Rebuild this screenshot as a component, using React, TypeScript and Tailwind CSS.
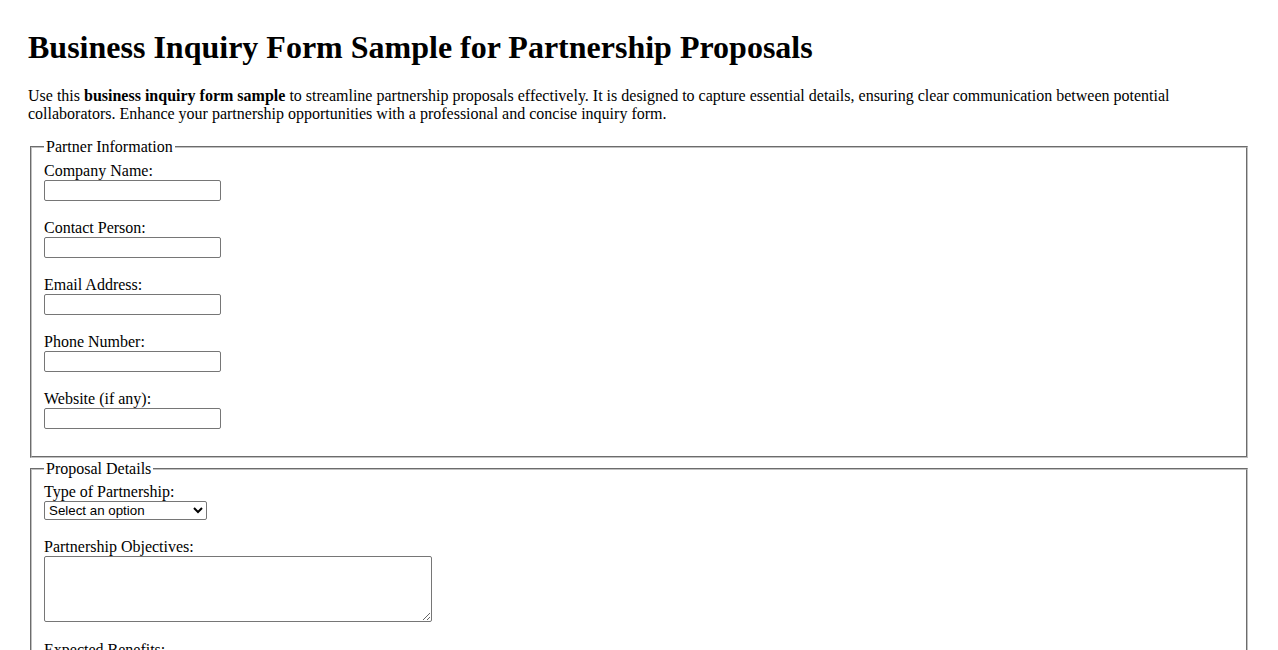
import React from 'react';

const partnerFields = [
  { id: 'company', label: 'Company Name:' },
  { id: 'contact', label: 'Contact Person:' },
  { id: 'email', label: 'Email Address:' },
  { id: 'phone', label: 'Phone Number:' },
  { id: 'website', label: 'Website (if any):' },
];

const inputCls =
  "block w-[177px] h-[21px] border border-[#767676] rounded-[2px] bg-white px-[2px] font-['Liberation_Sans'] text-[13.33px]";

export default function App() {
  return (
    <div className="min-h-screen bg-white px-[28px] pt-[29px] font-['Liberation_Serif',serif] text-[16px] text-black">
      <h1 className="mb-[21px] text-[32px] font-bold leading-[37px]">
        Business Inquiry Form Sample for Partnership Proposals
      </h1>
      <p className="mb-[15px] leading-[18px]">
        Use this <strong className="font-bold">business inquiry form sample</strong> to streamline partnership proposals
        effectively. It is designed to capture essential details, ensuring clear communication between potential
        collaborators. Enhance your partnership opportunities with a professional and concise inquiry form.
      </p>

      <form>
        {/* Partner block */}
        <fieldset className="mx-[2px] border-2 border-[#c0c0c0] [border-style:groove] px-[12px] pt-[5.6px] pb-[9px]">
          <legend className="px-[2px] leading-[18px]">Partner Information</legend>
          {partnerFields.map((f) => (
            <div key={f.id} className="mb-[18px]">
              <label htmlFor={f.id} className="block h-[18px] leading-[18px]">
                {f.label}
              </label>
              <input id={f.id} type="text" className={inputCls} />
            </div>
          ))}
        </fieldset>

        {/* Proposal block */}
        <fieldset className="mx-[2px] mt-[2px] border-2 border-[#c0c0c0] [border-style:groove] px-[12px] pt-[5.6px] pb-[10px]">
          <legend className="px-[2px] leading-[18px]">Proposal Details</legend>
          <div className="mb-[18px]">
            <label htmlFor="type" className="block h-[18px] leading-[18px]">
              Type of Partnership:
            </label>
            <select
              id="type"
              className="block w-[163px] h-[19px] border border-[#767676] rounded-[2px] bg-white font-['Liberation_Sans'] text-[13.33px]"
            >
              <option>Select an option</option>
              <option>Strategic Alliance</option>
              <option>Joint Venture</option>
              <option>Distribution</option>
            </select>
          </div>
          <div className="mb-[19px]">
            <label htmlFor="objectives" className="block h-[18px] leading-[18px]">
              Partnership Objectives:
            </label>
            <textarea
              id="objectives"
              className="block w-[388px] h-[66px] resize border border-[#767676] rounded-[2px] bg-white font-['Liberation_Mono'] text-[13.33px]"
            />
          </div>
          <div className="mb-[18px]">
            <label htmlFor="benefits" className="block h-[18px] leading-[18px]">
              Expected Benefits:
            </label>
            <textarea
              id="benefits"
              className="block w-[388px] h-[66px] resize border border-[#767676] rounded-[2px] bg-white font-['Liberation_Mono'] text-[13.33px]"
            />
          </div>
        </fieldset>
      </form>
    </div>
  );
}
